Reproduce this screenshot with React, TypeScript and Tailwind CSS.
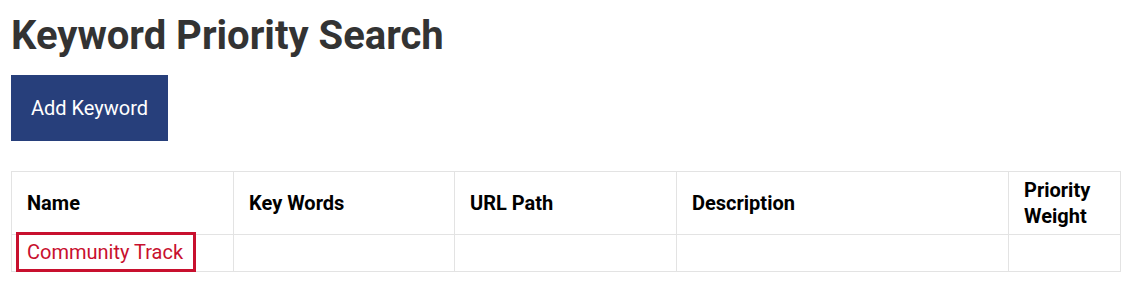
import React from "react";

const cols = [
  { label: "Name", w: "w-[222px]" },
  { label: "Key Words", w: "w-[221px]" },
  { label: "URL Path", w: "w-[222px]" },
  { label: "Description", w: "w-[332px]" },
  { label: "Priority Weight", w: "w-[112px]" },
];

export default function App() {
  return (
    <div className="min-h-screen bg-white px-[11px] pt-[12px] font-['Roboto',sans-serif]">
      <h1 className="text-[40px] leading-[48px] font-bold text-[#333333]">Keyword Priority Search</h1>
      <button className="mt-[15px] block bg-[#273f7b] px-5 py-[21px] text-[20px] leading-6 text-white">
        Add Keyword
      </button>
      <table className="mt-[30px] w-[1109px] table-fixed border-collapse">
        <colgroup>
          {cols.map((c) => (
            <col key={c.label} className={c.w} />
          ))}
        </colgroup>
        <thead>
          <tr>
            {cols.map((c) => (
              <th
                key={c.label}
                className="h-[63px] border border-[#e3e3e3] pl-[15px] pr-4 py-[5px] text-left align-middle text-[20px] leading-[26px] font-bold text-black"
              >
                {c.label}
              </th>
            ))}
          </tr>
        </thead>
        <tbody>
          <tr>
            <td className="h-[37px] border border-[#e3e3e3] py-0 pl-[7px] pr-4 align-top">
              <a
                href="#"
                className="inline-block pl-[8px] pr-[10px] py-[6px] text-[20px] leading-[22px] text-[#c8102e] outline-[3px] outline-solid outline-[#c8102e]"
              >
                Community Track
              </a>
            </td>
            <td className="border border-[#e3e3e3]"></td>
            <td className="border border-[#e3e3e3]"></td>
            <td className="border border-[#e3e3e3]"></td>
            <td className="border border-[#e3e3e3]"></td>
          </tr>
        </tbody>
      </table>
    </div>
  );
}
